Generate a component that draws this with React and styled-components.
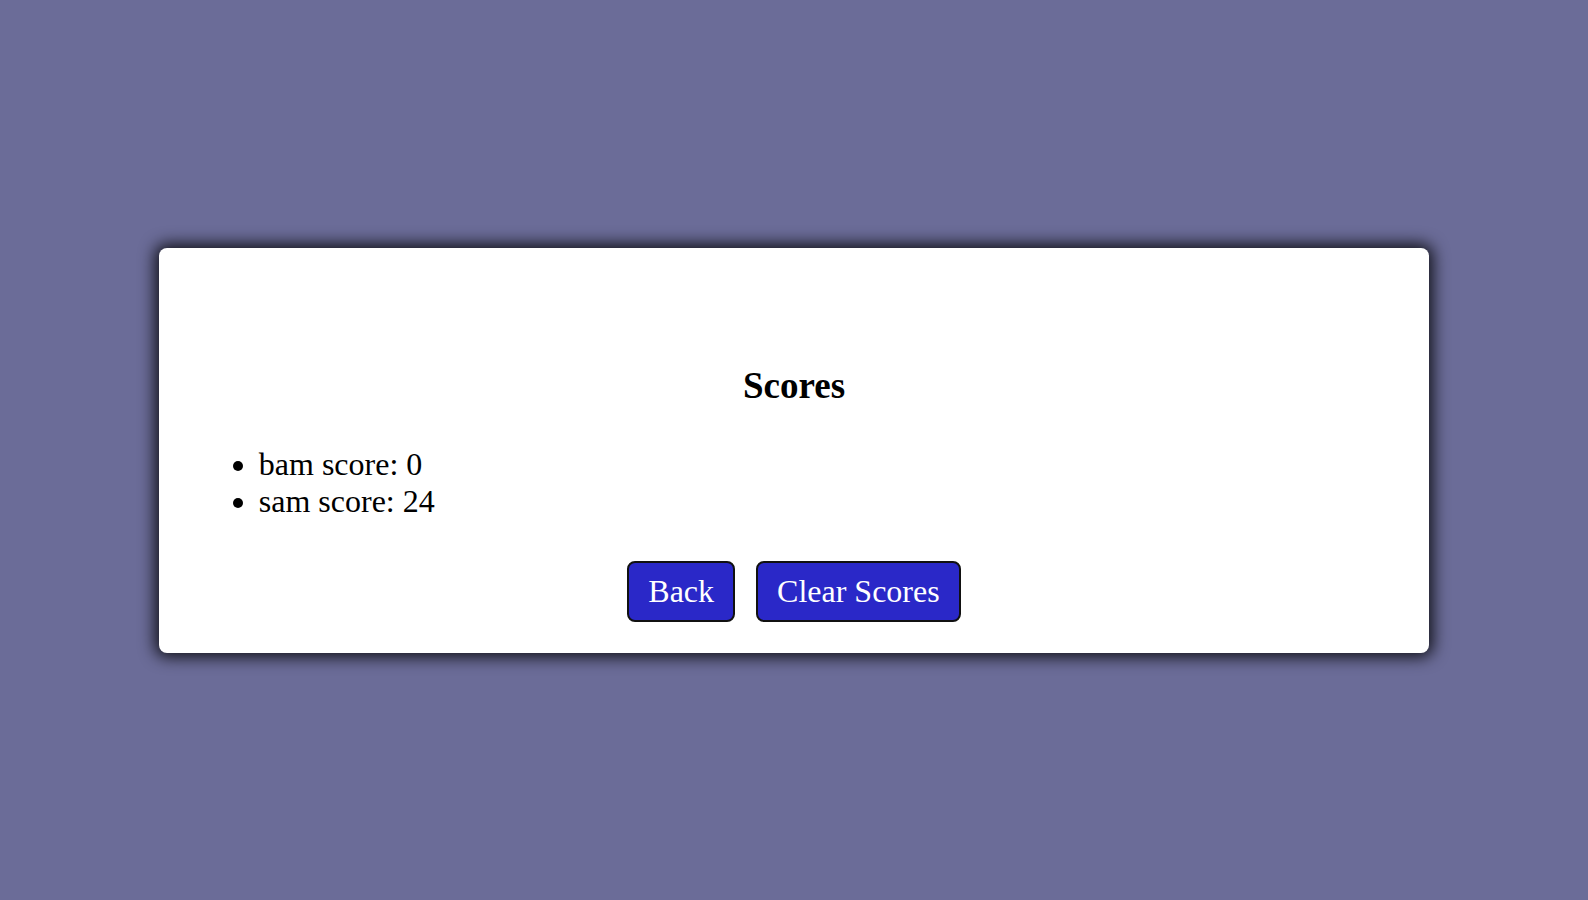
import React from 'react'
import styled, { createGlobalStyle } from 'styled-components'

const GlobalStyle = createGlobalStyle`
  html, body {
    margin: 0;
    padding: 0;
    height: 100%;
  }
  body {
    background: #6b6c98;
    font-family: "Liberation Serif", "Times New Roman", serif;
  }
`

const Page = styled.div`
  min-height: 100vh;
  display: flex;
  align-items: center;
  justify-content: center;
`

const Card = styled.div`
  width: 80%;
  box-sizing: border-box;
  background: #fff;
  border-radius: 8px;
  box-shadow: 0 0 16px 4px rgba(0, 0, 0, 0.85);
  padding: 116px 60px 31px;
`

const Title = styled.h2`
  margin: 0 0 39px;
  text-align: center;
  font-size: 37px;
  font-weight: bold;
  color: #000;
`

const ScoreList = styled.ul`
  margin: 0 0 41px;
  padding-left: 40px;
  font-size: 32px;
  color: #000;
`

const ScoreItem = styled.li``

const Actions = styled.div`
  display: flex;
  justify-content: center;
  gap: 21px;
`

const Button = styled.button`
  font-family: "Liberation Serif", "Times New Roman", serif;
  font-size: 32px;
  color: #fff;
  background: #2a28c8;
  border: 2px solid #111;
  border-radius: 8px;
  padding: 10px 19px;
  cursor: pointer;
`

const scores = [
  { name: 'bam', score: 0 },
  { name: 'sam', score: 24 },
]

export default function App() {
  return (
    <>
      <GlobalStyle />
      <Page>
        <Card>
          <Title>Scores</Title>
          <ScoreList>
            {scores.map(s => (
              <ScoreItem key={s.name}>{s.name} score: {s.score}</ScoreItem>
            ))}
          </ScoreList>
          <Actions>
            <Button>Back</Button>
            <Button>Clear Scores</Button>
          </Actions>
        </Card>
      </Page>
    </>
  )
}
